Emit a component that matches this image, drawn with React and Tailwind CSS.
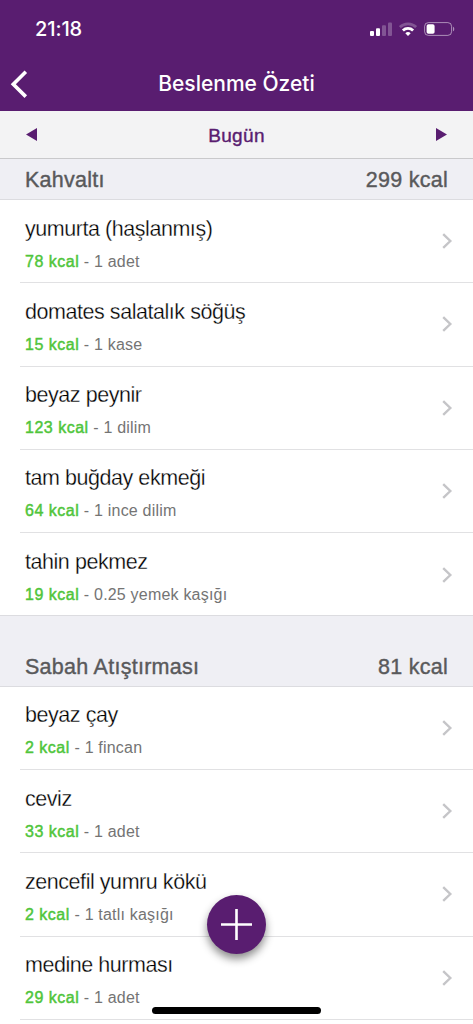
import React from 'react';

const meals = [
  {
    name: 'Kahvaltı',
    total: '299 kcal',
    items: [
      { name: 'yumurta (haşlanmış)', kcal: '78 kcal', amount: '1 adet' },
      { name: 'domates salatalık söğüş', kcal: '15 kcal', amount: '1 kase' },
      { name: 'beyaz peynir', kcal: '123 kcal', amount: '1 dilim' },
      { name: 'tam buğday ekmeği', kcal: '64 kcal', amount: '1 ince dilim' },
      { name: 'tahin pekmez', kcal: '19 kcal', amount: '0.25 yemek kaşığı' },
    ],
  },
  {
    name: 'Sabah Atıştırması',
    total: '81 kcal',
    items: [
      { name: 'beyaz çay', kcal: '2 kcal', amount: '1 fincan' },
      { name: 'ceviz', kcal: '33 kcal', amount: '1 adet' },
      { name: 'zencefil yumru kökü', kcal: '2 kcal', amount: '1 tatlı kaşığı' },
      { name: 'medine hurması', kcal: '29 kcal', amount: '1 adet' },
    ],
  },
];

function StatusBar() {
  return (
    <div className="flex h-[58px] items-center justify-between pl-[35px] pr-[18px]">
      <span className="text-[20px] leading-6 font-medium tracking-[-0.1px]">21:18</span>
      <div className="flex items-center gap-[7px]">
        {/* signal */}
        <svg width="22" height="14" viewBox="0 0 22 14" fill="#fff">
          <rect x="0" y="9" width="4" height="5" rx="1" />
          <rect x="6" y="6.2" width="4" height="7.8" rx="1" />
          <rect x="12" y="3.2" width="4" height="10.8" rx="1" opacity="0.25" />
          <rect x="18" y="0.5" width="4" height="13.5" rx="1" opacity="0.25" />
        </svg>
        {/* wifi */}
        <svg width="18" height="14" viewBox="0 0 18 14" fill="none" stroke="#fff" strokeWidth="2.8">
          <path d="M0.9 5.1a11.6 11.6 0 0 1 16.2 0" opacity="0.25" />
          <path d="M3.9 8.4a7.3 7.3 0 0 1 10.2 0" />
          <path d="M9 14 6.3 11.3a3.9 3.9 0 0 1 5.4 0z" fill="#fff" stroke="none" />
        </svg>
        {/* battery */}
        <svg width="31" height="14" viewBox="0 0 31 14">
          <rect x="0.6" y="0.6" width="27" height="12.8" rx="3.8" fill="none" stroke="#fff" strokeWidth="1" opacity="0.5" />
          <rect x="2.6" y="2.3" width="8" height="9.4" rx="1.8" fill="#fff" />
          <path d="M29 4.7c1.7.7 1.7 3.9 0 4.6z" fill="#fff" opacity="0.5" />
        </svg>
      </div>
    </div>
  );
}

function FoodRow({ item, last }) {
  return (
    <div className="h-[83.25px] pl-5">
      <div className={`flex h-full items-center justify-between pl-[5px] pr-5 ${last ? '' : 'border-b border-[#e1e1e3]'}`}>
        <div className="pt-[6px]">
          <div className="text-[21.5px] leading-7 tracking-[-0.45px] whitespace-nowrap text-black [-webkit-text-stroke:0.3px_#fff]">{item.name}</div>
          <div className="mt-[7px] text-[16px] leading-6 tracking-[0.2px] whitespace-nowrap text-[#747474]">
            <span className="tracking-[0.5px] text-[#4fc53b] [-webkit-text-stroke:0.45px_#4fc53b]">{item.kcal}</span> - {item.amount}
          </div>
        </div>
        <svg width="12" height="18" viewBox="0 0 12 18" fill="none" stroke="#c5c5c8" strokeWidth="2.4">
          <path d="M2.2 2.2 9.3 9l-7.1 6.8" />
        </svg>
      </div>
    </div>
  );
}

function App() {
  return (
    <div className="relative h-[1024px] w-[473px] overflow-hidden bg-white font-['Liberation_Sans',Arial,sans-serif]">
      <header className="h-[111px] bg-[#591d70] font-['Inter',sans-serif] text-white">
        <StatusBar />
        <div className="grid h-[51px] grid-cols-[60px_1fr_60px] items-center">
          <button className="pl-[10px]" aria-label="Geri">
            <svg width="20" height="28" viewBox="0 0 20 28" fill="none" stroke="#fff" strokeWidth="3.6">
              <path d="M15.8 1.8 3.3 14.2l12.5 12.4" />
            </svg>
          </button>
          <h1 className="text-center text-[21px] leading-6 font-medium">Beslenme Özeti</h1>
        </div>
      </header>

      {/* Day switcher */}
      <div className="flex h-12 items-center justify-between border-b border-[#c9c9cb] bg-[#f3f3f4] pl-[26px] pr-[26px]">
        <svg width="11" height="13" viewBox="0 0 11 13" fill="#591d70"><path d="M11 0v13L0 6.5z" /></svg>
        <span className="pt-0.5 text-[19px] leading-6 tracking-[0.35px] text-[#591d70] [-webkit-text-stroke:0.4px_#591d70]">Bugün</span>
        <svg width="11" height="13" viewBox="0 0 11 13" fill="#591d70"><path d="M0 0v13l11-6.5z" /></svg>
      </div>

      {meals.map((meal, i) => (
        <section key={meal.name}>
          <div
            className={`flex items-end justify-between border-b border-[#dcdce0] bg-[#efeff4] px-[25px] pb-[7px] text-[21.5px] leading-6 tracking-[0.27px] text-[#59595b] [-webkit-text-stroke:0.4px_#59595b] ${
              i === 0 ? 'h-[41px]' : '-mt-px h-[71.6px] border-t'
            }`}
          >
            <span>{meal.name}</span>
            <span>{meal.total}</span>
          </div>
          {meal.items.map((item, j) => (
            <FoodRow key={item.name} item={item} last={i === 0 && j === meal.items.length - 1} />
          ))}
        </section>
      ))}

      <button
        className="absolute top-[895px] left-[207px] flex h-[59px] w-[59px] items-center justify-center rounded-full bg-[#591d70] shadow-[0_5px_9px_rgba(0,0,0,0.45)]"
        aria-label="Ekle"
      >
        <svg width="31" height="31" viewBox="0 0 31 31" stroke="#fff" strokeWidth="2.6">
          <path d="M15.5 0v31M0 15.5h31" />
        </svg>
      </button>
      <div className="absolute top-[1007px] left-[152px] h-[7px] w-[169px] rounded-full bg-black" />
    </div>
  );
}

export default App;
